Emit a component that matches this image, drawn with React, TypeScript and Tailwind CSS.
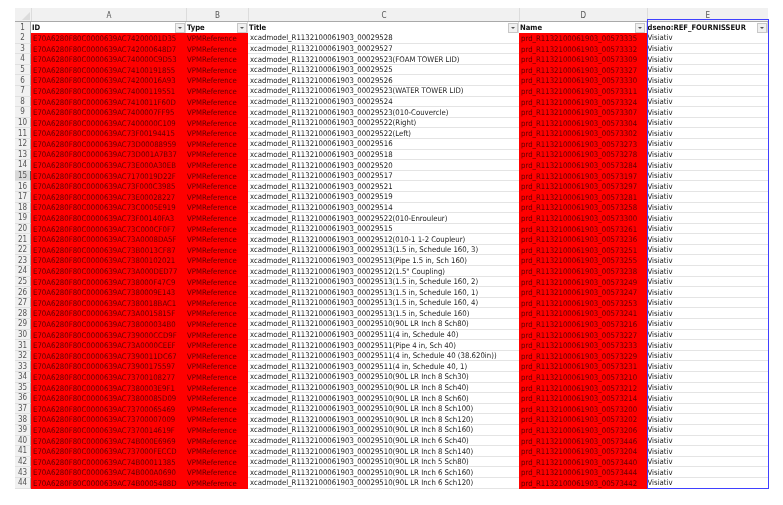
const ids = [
  '74200001D35', '742000648D7', '740000C9D53', '74100191855', '74200016A93', '74000119551', '7410011F60D', '7400007FF95', '7400000C109', '73F00194415', '73D00088959',
  '73D001A7B37', '73E000A30EB', '7170019D22F', '73F000C3985', '73E00028227', '73C0005E919', '73F00140FA3', '73C000CF0F7', '73A0008DA5F', '73B0013CF87', '73800102021',
  '73A000DED77', '738000F47C9', '7380009E143', '7380018BAC1', '73A0015815F', '738000034B0', '739000CCD9F', '73A0000CEEF', '7390011DC67', '73900175597', '73700108277',
  '7380003E9F1', '73800085D09', '73700065469', '73700007009', '7370014619F', '74B000E6969', '737000FECCD', '74B00011385', '74B000A0690', '74B0005488D',
]

const titles = [
  '29528', '29527', '29523(FOAM TOWER LID)', '29525', '29526', '29523(WATER TOWER LID)', '29524', '29523(010-Couvercle)', '29522(Right)', '29522(Left)', '29516',
  '29518', '29520', '29517', '29521', '29519', '29514', '29522(010-Enrouleur)', '29515', '29512(010-1 1-2 Coupleur)', '29513(1.5 in, Schedule 160, 3)', '29513(Pipe 1.5 in, Sch 160)',
  '29512(1.5" Coupling)', '29513(1.5 in, Schedule 160, 2)', '29513(1.5 in, Schedule 160, 1)', '29513(1.5 in, Schedule 160, 4)', '29513(1.5 in, Schedule 160)', '29510(90L LR Inch 8 Sch80)',
  '29511(4 in, Schedule 40)', '29511(Pipe 4 in, Sch 40)', '29511(4 in, Schedule 40 (38.620in))', '29511(4 in, Schedule 40, 1)', '29510(90L LR Inch 8 Sch30)', '29510(90L LR Inch 8 Sch40)',
  '29510(90L LR Inch 8 Sch60)', '29510(90L LR Inch 8 Sch100)', '29510(90L LR Inch 8 Sch120)', '29510(90L LR Inch 8 Sch160)', '29510(90L LR Inch 6 Sch40)', '29510(90L LR Inch 8 Sch140)',
  '29510(90L LR Inch 5 Sch80)', '29510(90L LR Inch 6 Sch160)', '29510(90L LR Inch 6 Sch120)',
]

const names = [
  335, 332, 309, 327, 330, 311, 324, 307, 304, 302, 273, 278, 284, 197, 297, 281, 258, 300, 261, 236, 251, 255, 238, 249, 247, 253, 241, 216, 227, 233, 229, 231, 210, 212, 214, 200, 202, 206, 446, 204, 440, 444, 442,
]

const cols = 'grid grid-cols-[16px_155px_62px_271px_127.5px_121.5px]'

function FilterCell({ label }: { label: string }) {
  return (
    <div className="flex items-center justify-between bg-white border-r border-[#d8d8d8] pl-[1px] min-w-0">
      <span className="font-bold text-[7.6px] text-[#111] whitespace-nowrap">{label}</span>
      <span className="flex items-center justify-center w-[10px] h-[10px] mr-[0.5px] bg-[#f0f0f0] border border-[#c8c8c8]">
        <span className="w-0 h-0 border-x-[2px] border-x-transparent border-t-[2px] border-t-[#555]" />
      </span>
    </div>
  )
}

export default function App() {
  return (
    <div className="w-[783px] h-[505px] bg-white pt-[8px] pl-[15px] overflow-hidden font-['DejaVu_Sans_Condensed','DejaVu_Sans',sans-serif] text-[7.72px] leading-none">
      <div className="relative w-[753px] blur-[0.25px]">
        {/* column letters */}
        <div className={`${cols} h-[14px] bg-[#f1f1f1] text-[#555] text-[8px] border-b border-[#a9a9a9]`}>
          <div className="flex items-end justify-end pr-[1px] pb-[1px]">
            <span className="w-0 h-0 border-l-[8px] border-l-transparent border-b-[8px] border-b-[#dcdcdc]" />
          </div>
          {['A', 'B', 'C', 'D', 'E'].map(l => (
            <div key={l} className="flex items-center justify-center border-l border-[#dcdcdc] pt-[3px]">{l}</div>
          ))}
        </div>

        {/* filter row */}
        <div className={`${cols} h-[11px]`}>
          <div className="flex items-center justify-center bg-[#f1f1f1] text-[#555] text-[8px] border-r border-[#a9a9a9]">1</div>
          <FilterCell label="ID" />
          <FilterCell label="Type" />
          <FilterCell label="Title" />
          <FilterCell label="Name" />
          <FilterCell label="dseno:REF_FOURNISSEUR" />
        </div>

        {ids.map((id, i) => {
          const row = i + 2
          const selected = row === 15
          return (
            <div key={row} className={`${cols} h-[10.6px]`}>
              <div className={`flex items-center justify-center pt-[1px] text-[#555] text-[8px] border-r border-b border-b-[#e0e0e0] ${selected ? 'bg-[#d9d9d9] border-r-[#555]' : 'bg-[#f1f1f1] border-r-[#a9a9a9]'}`}>{row}</div>
              <div className="flex items-center bg-[#ff0000] text-[#600000] pt-[1px] pl-[2px] whitespace-nowrap">E70A6280F80C0000639AC{id}</div>
              <div className="flex items-center bg-[#ff0000] text-[#600000] pt-[1px] pl-[1px] whitespace-nowrap">VPMReference</div>
              <div className="flex items-center bg-white text-[#222] border-b border-[#e4e4e4] pt-[1px] pl-[2px] whitespace-nowrap">xcadmodel_R1132100061903_000{titles[i]}</div>
              <div className="flex items-center bg-[#ff0000] text-[#600000] pt-[1px] pl-[2px] whitespace-nowrap">prd_R1132100061903_00573{names[i]}</div>
              <div className="flex items-center bg-white text-[#222] border-b border-[#e4e4e4] pt-[1px] pl-[1px]">Visiativ</div>
            </div>
          )
        })}

        {/* selected column outline */}
        <div className="absolute left-[631.5px] top-[11px] bottom-[0px] w-[122px] border-[1.5px] border-[#4040ff] pointer-events-none" />
      </div>
    </div>
  )
}
